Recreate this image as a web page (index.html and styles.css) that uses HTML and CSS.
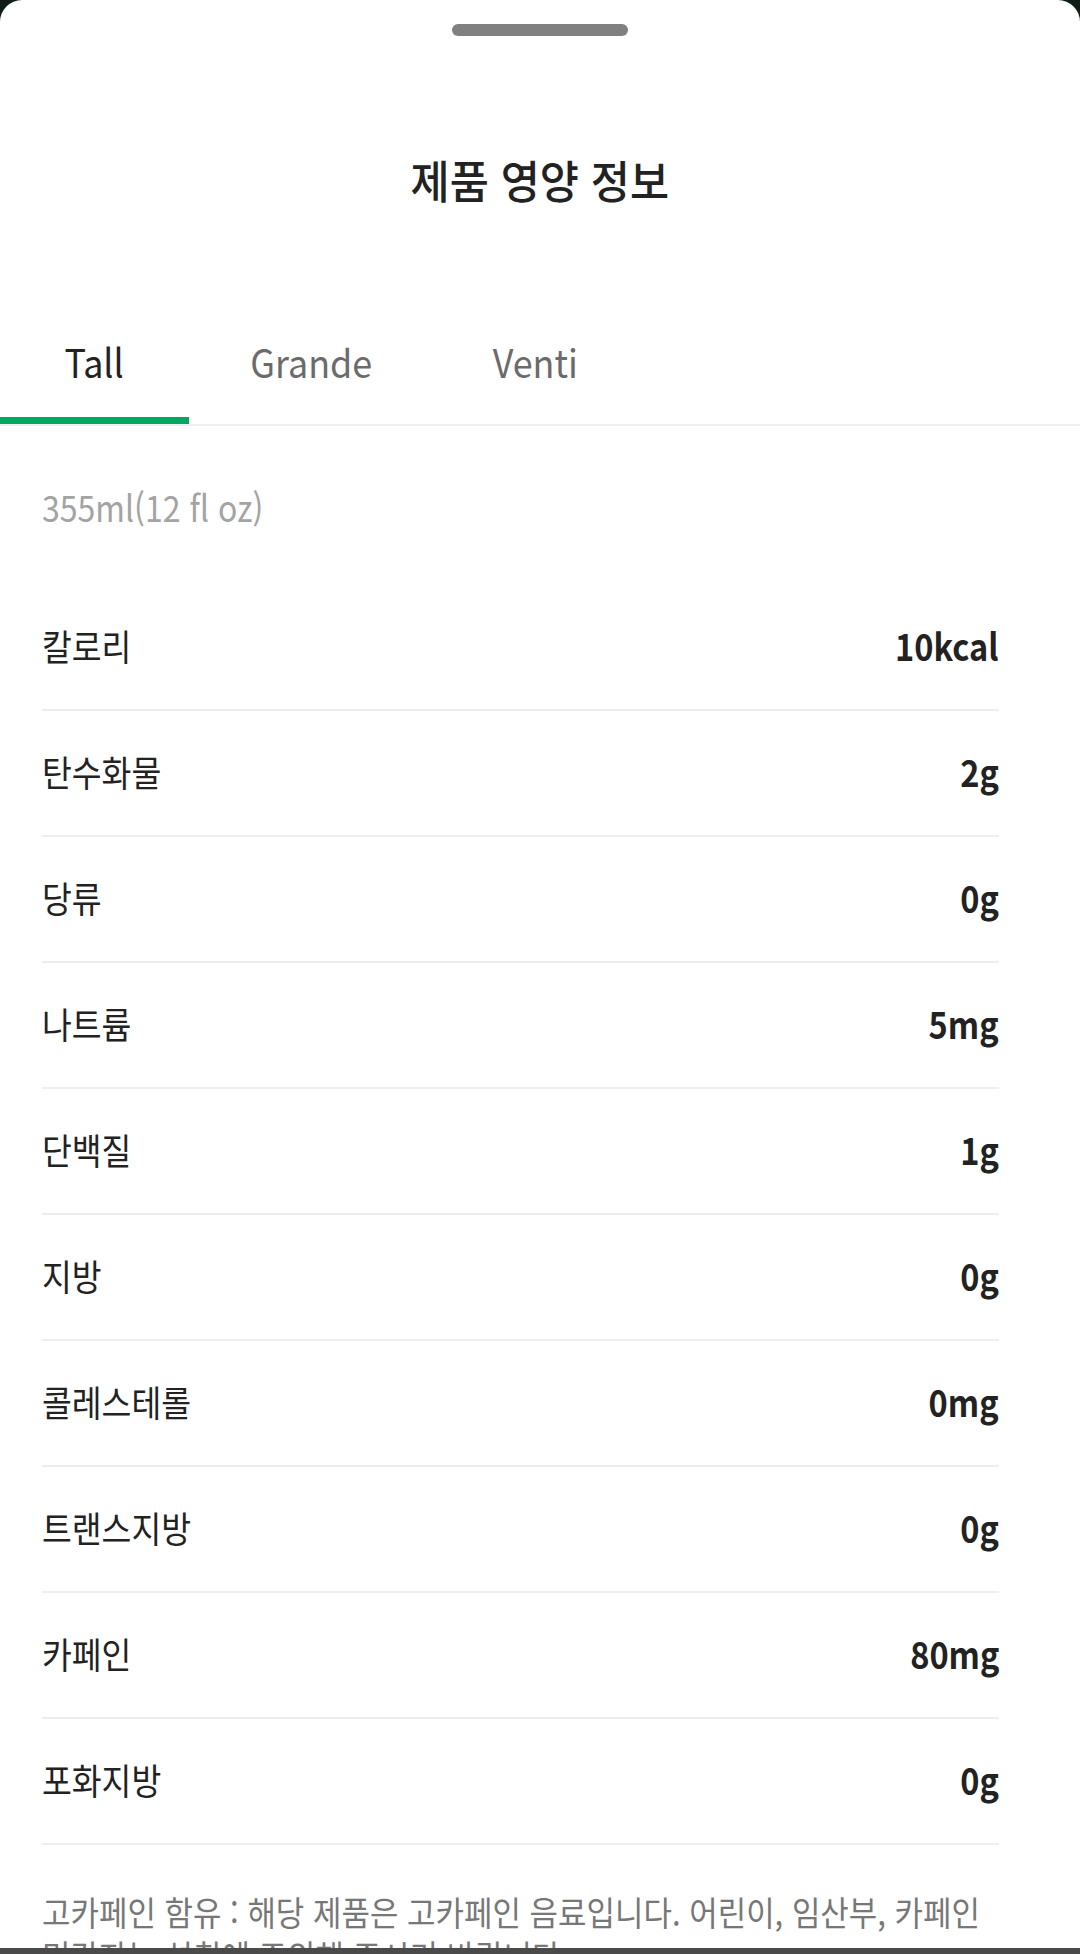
FILE: index.html
```html
<!DOCTYPE html>
<html lang="ko">
<head>
<meta charset="utf-8">
<title>제품 영양 정보</title>
<link rel="stylesheet" href="styles.css">
</head>
<body>
<div class="sheet">
  <div class="handle"></div>
  <h1 class="title"><span class="ko">제품 영양 정보</span></h1>
  <div class="tabs">
    <div class="tab active"><span class="tab-text">Tall</span></div>
    <div class="tab"><span class="tab-text">Grande</span></div>
    <div class="tab"><span class="tab-text">Venti</span></div>
  </div>
  <div class="content">
    <p class="size"><span class="size-text">355ml(12 fl oz)</span></p>
    <ul class="list">
      <li class="row"><span class="label">칼로리</span><span class="value">10kcal</span></li>
      <li class="row"><span class="label">탄수화물</span><span class="value">2g</span></li>
      <li class="row"><span class="label">당류</span><span class="value">0g</span></li>
      <li class="row"><span class="label">나트륨</span><span class="value">5mg</span></li>
      <li class="row"><span class="label">단백질</span><span class="value">1g</span></li>
      <li class="row"><span class="label">지방</span><span class="value">0g</span></li>
      <li class="row"><span class="label">콜레스테롤</span><span class="value">0mg</span></li>
      <li class="row"><span class="label">트랜스지방</span><span class="value">0g</span></li>
      <li class="row"><span class="label">카페인</span><span class="value">80mg</span></li>
      <li class="row"><span class="label">포화지방</span><span class="value">0g</span></li>
    </ul>
    <p class="note">고카페인 함유 : 해당 제품은 고카페인 음료입니다. 어린이, 임산부, 카페인 민감자는 섭취에 주의해 주시기 바랍니다.</p>
  </div>
</div>
<div class="navbar"></div>
</body>
</html>
```
FILE: styles.css
```css
html, body {
  margin: 0;
  padding: 0;
  background: #0f1d16;
  height: 100%;
  overflow: hidden;
}

body {
  font-family: "Noto Sans CJK KR", "Noto Sans", sans-serif;
  color: #222222;
}

.sheet {
  background: #ffffff;
  border-radius: 22px 22px 0 0;
  min-height: 100%;
  overflow: hidden;
}

.handle {
  width: 176px;
  height: 12px;
  margin: 24px auto 0;
  border-radius: 6px;
  background: #808080;
}

.title {
  margin: 114px 0 0;
  height: 60px;
  line-height: 60px;
  font-size: 45px;
  font-weight: 500;
  text-align: center;
  color: #222222;
}

.title .ko {
  display: inline-block;
  transform: scaleX(0.945);
  transform-origin: center;
}

.tabs {
  display: flex;
  margin-top: 88px;
  border-bottom: 2px solid #eeeeee;
}

.tab {
  position: relative;
  box-sizing: border-box;
  min-width: 189px;
  padding: 0 56px;
  height: 126px;
  line-height: 126px;
  font-size: 39px;
  text-align: center;
  color: #6b6b6b;
}

.tab-text {
  display: inline-block;
  transform: scaleX(0.92);
  transform-origin: center;
}

.tab.active {
  color: #222222;
}

.tab.active::after {
  content: "";
  position: absolute;
  left: 0;
  right: 0;
  bottom: 0;
  height: 7px;
  background: #00a862;
}

.content {
  padding: 0 81px 0 42px;
}

.size {
  margin: 55px 0 0;
  font-size: 36px;
  line-height: 50px;
  color: #a3a3a3;
}

.size-text {
  display: inline-block;
  transform: scaleX(0.89);
  transform-origin: left center;
}

.list {
  list-style: none;
  margin: 54px 0 0;
  padding: 0;
}

.row {
  display: flex;
  justify-content: space-between;
  align-items: flex-start;
  height: 124px;
  border-bottom: 2px solid #eeeeee;
}

.label {
  display: inline-block;
  font-size: 36px;
  line-height: 120px;
  color: #222222;
  transform: scaleX(0.9);
  transform-origin: left center;
  white-space: nowrap;
}

.value {
  display: inline-block;
  font-size: 37px;
  line-height: 120px;
  font-weight: 700;
  color: #222222;
  transform: scaleX(0.88);
  transform-origin: right center;
}

.note {
  margin: 45px 0 0;
  width: calc(100% / 0.91);
  font-size: 34px;
  line-height: 44px;
  color: #777777;
  word-break: keep-all;
  transform: scaleX(0.91);
  transform-origin: left top;
}

.navbar {
  position: fixed;
  left: 0;
  right: 0;
  bottom: 0;
  height: 6px;
  background: #4a4a4a;
}
```
